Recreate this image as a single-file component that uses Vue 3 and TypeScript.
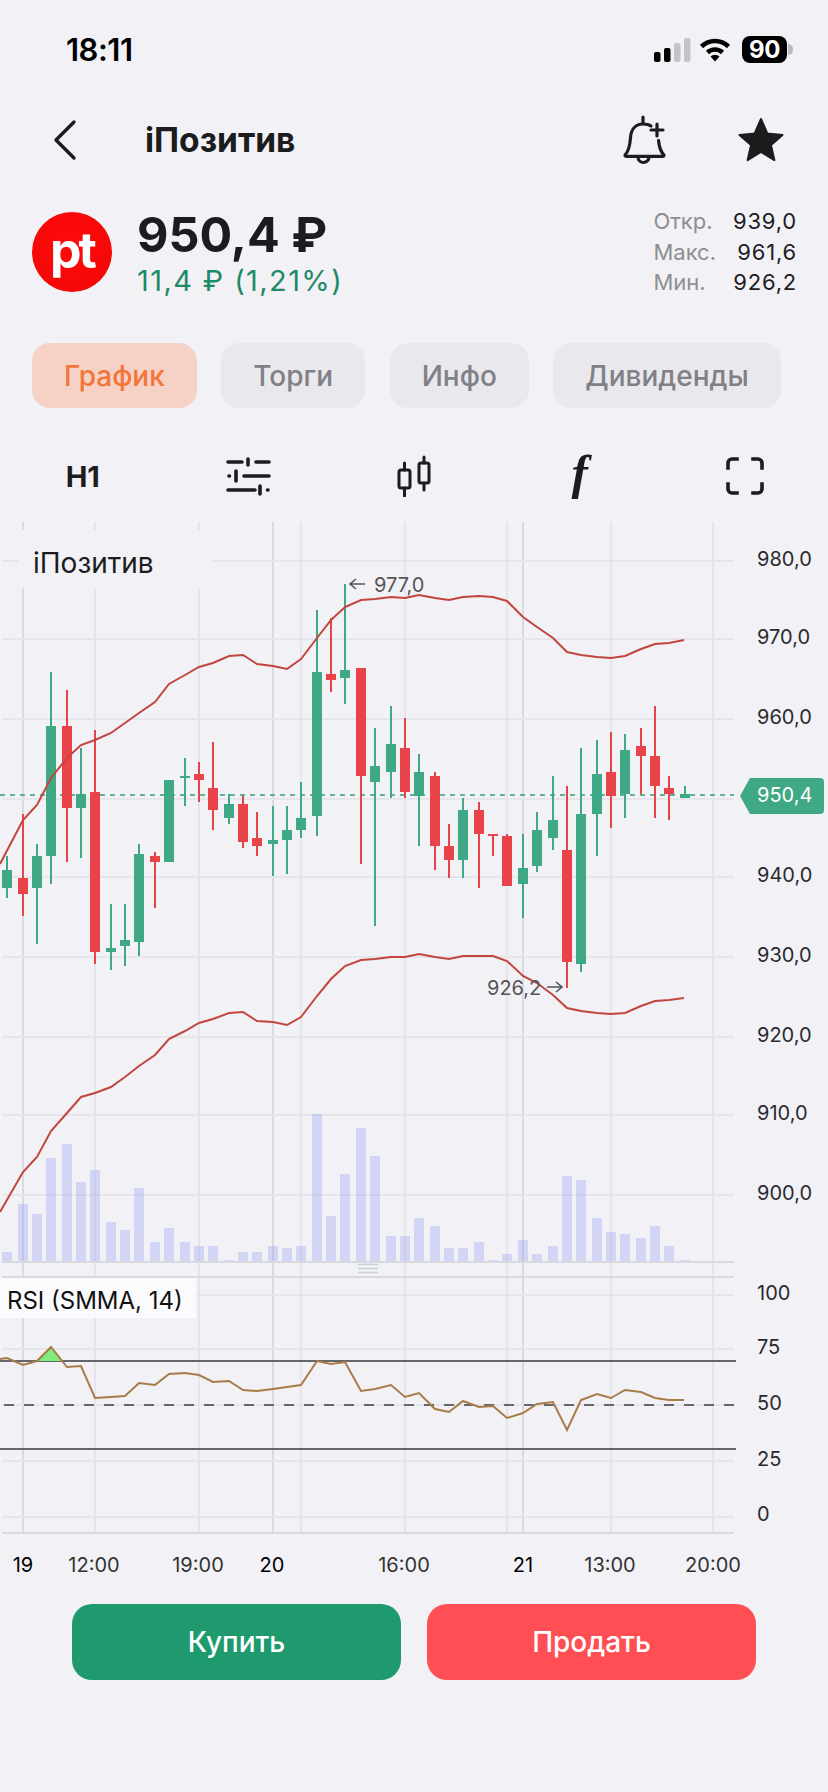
<template>
  <div class="screen">
    <div class="status-bar">
      <span class="time">18:11</span>
      <div class="status-icons">
        <svg class="signal" width="37" height="24" viewBox="0 0 37 24">
          <rect x="0" y="14" width="6.5" height="10" rx="2" fill="#000" />
          <rect x="10" y="10" width="6.5" height="14" rx="2" fill="#000" />
          <rect x="20" y="5" width="6.5" height="19" rx="2" fill="#c3c3c8" />
          <rect x="30" y="0" width="6.5" height="24" rx="2" fill="#c3c3c8" />
        </svg>
        <svg class="wifi" width="32" height="25" viewBox="0 0 32 25">
          <path d="M2.5 9.5a19.5 19.5 0 0 1 27 0" fill="none" stroke="#000" stroke-width="4.6" />
          <path d="M8.5 15.5a11 11 0 0 1 15 0" fill="none" stroke="#000" stroke-width="4.6" />
          <path d="M11.5 19.5a6.5 6.5 0 0 1 9 0L16 24.5z" fill="#000" />
        </svg>
        <div class="battery">
          <span class="battery-level">90</span>
          <i class="battery-nub"></i>
        </div>
      </div>
    </div>

    <div class="nav">
      <svg class="back" width="24" height="42" viewBox="0 0 24 42">
        <path d="M21 3 3 21l18 18" fill="none" stroke="#1c1c1e" stroke-width="3.4" stroke-linecap="round" stroke-linejoin="round" />
      </svg>
      <span class="nav-title">iПозитив</span>
      <svg class="bell" width="48" height="52" viewBox="0 0 48 52">
        <path d="M23 4v6" fill="none" stroke="#1c1c1e" stroke-width="3.2" stroke-linecap="round" />
        <path d="M31 13c-2-1.500-4.500-2-8-2-8.500 0-12 6.500-12.500 13.500-.5 8-1.500 13-5 17-1 1-.5 1.800.8 1.800h36.400c1.300 0 1.800-.8.800-1.800-2.800-3-4.300-7.500-5-14" fill="none" stroke="#1c1c1e" stroke-width="3.2" stroke-linecap="round" stroke-linejoin="round" />
        <path d="M18 44a5.500 5.500 0 0 0 11 0" fill="none" stroke="#1c1c1e" stroke-width="3.2" />
        <path d="M37 11v12M31 17h12" fill="none" stroke="#1c1c1e" stroke-width="3.2" stroke-linecap="round" />
      </svg>
      <svg class="star" width="48" height="46" viewBox="0 0 48 46">
        <path d="M24 3l6.300 14.500 15.200 1.400-11.500 10.200 3.400 15L24 36l-13.400 8.100 3.400-15L2.500 18.900l15.200-1.400z" fill="#1c1c1e" stroke="#1c1c1e" stroke-width="2" stroke-linejoin="round" />
      </svg>
    </div>

    <div class="quote">
      <div class="logo"><span>pt</span></div>
      <div class="quote-main">
        <div class="price">950,4 ₽</div>
        <div class="change">11,4 ₽ (1,21%)</div>
      </div>
      <div class="ohlc">
        <template v-for="row in ohlc" :key="row.label">
          <span class="ohlc-label">{{ row.label }}</span>
          <span class="ohlc-value">{{ row.value }}</span>
        </template>
      </div>
    </div>

    <div class="tabs">
      <button v-for="(tab, i) in tabs" :key="tab" :class="['tab', { active: i === 0 }]">{{ tab }}</button>
    </div>

    <div class="toolbar">
      <span class="tool h1">H1</span>
      <svg class="tool" width="46" height="40" viewBox="0 0 46 40" fill="none" stroke="#1c1c1e" stroke-width="3.6" stroke-linecap="round">
        <path d="M3 6h14M23 3v6M31 6h13" />
        <path d="M4 20h.5M11 15v10M19 20h25" />
        <path d="M3 34h27M35 30v8M42.500 34h.5" />
      </svg>
      <svg class="tool" width="36" height="42" viewBox="0 0 36 42" fill="none" stroke="#1c1c1e" stroke-width="3">
        <rect x="3" y="15" width="11" height="18" rx="2" />
        <path d="M8.500 8v7M8.500 33v8" stroke-linecap="round" />
        <rect x="23" y="8" width="10" height="20" rx="2" />
        <path d="M28 2v6M28 28v7" stroke-linecap="round" />
      </svg>
      <span class="tool fx">f</span>
      <svg class="tool" width="38" height="38" viewBox="0 0 38 38" fill="none" stroke="#1c1c1e" stroke-width="3.6" stroke-linecap="square">
        <path d="M2 11V6a4 4 0 0 1 4-4h5M27 2h5a4 4 0 0 1 4 4v5M36 27v5a4 4 0 0 1-4 4h-5M11 36H6a4 4 0 0 1-4-4v-5" />
      </svg>
    </div>

    <!-- viewBox keeps the chart in screen coordinates, y starts where the chart does -->
    <svg class="chart" width="828" height="1068" viewBox="0 522 828 1068">
      <line v-for="x in gridX" :key="'gx' + x" :x1="x" :x2="x" y1="522" y2="1533" class="grid" />
      <line v-for="x in dayX" :key="'dx' + x" :x1="x" :x2="x" y1="522" y2="1533" class="grid day" />
      <line v-for="y in gridY" :key="'gy' + y" x1="2" x2="734" :y1="y" :y2="y" class="grid" />

      <rect x="18" y="530" width="194" height="58" fill="#f1f1f6" />
      <text x="33" y="573" class="series-name">iПозитив</text>

      <rect v-for="v in volumes" :key="'v' + v.x" :x="v.x - 5" :y="v.top" width="10" :height="1262 - v.top" fill="#7d8cf0" opacity="0.27" />
      <line x1="2" x2="734" y1="1262" y2="1262" class="axis" />
      <line x1="2" x2="734" y1="1277" y2="1277" class="axis" />
      <path d="M358 1264.500h20M358 1268.500h20M358 1272.500h20" stroke="#c8d2d5" stroke-width="1.500" />

      <line x1="0" x2="734" y1="795" y2="795" stroke="#2f9c78" stroke-width="1.500" stroke-dasharray="5 5" />

      <g v-for="c in candles" :key="c.x" :fill="c.up ? green : red" :stroke="c.up ? green : red">
        <line :x1="c.x" :x2="c.x" :y1="c.high" :y2="c.low" stroke-width="2" />
        <rect :x="c.x - 5" :y="c.top" width="10" :height="c.bottom - c.top" stroke="none" />
      </g>

      <polyline :points="bandUpper" class="band" />
      <polyline :points="bandLower" class="band" />

      <path d="M365 584h-15m6-5-6 5 6 5" fill="none" stroke="#555" stroke-width="1.600" />
      <text x="374" y="592" class="mark">977,0</text>
      <text x="487" y="995" class="mark">926,2</text>
      <path d="M547 987h15m-6-5 6 5-6 5" fill="none" stroke="#555" stroke-width="1.600" />

      <text v-for="p in priceLabels" :key="p.text" x="757" :y="p.y + 7" class="axis-label">{{ p.text }}</text>
      <path d="M750 778h70a4 4 0 0 1 4 4v28a4 4 0 0 1-4 4h-70l-10-18z" fill="#3fa884" />
      <text x="757" y="802" class="axis-label current">950,4</text>

      <rect x="0" y="1278" width="196" height="40" fill="#fbfbfd" />
      <text x="7" y="1309" class="rsi-name">RSI (SMMA, 14)</text>
      <line x1="0" x2="736" y1="1361" y2="1361" class="level" />
      <line x1="0" x2="736" y1="1449" y2="1449" class="level" />
      <line x1="4" x2="734" y1="1405" y2="1405" class="level" stroke-dasharray="10 10" />
      <polygon points="37,1361 51,1347 62,1361" fill="#7fee7f" />
      <polyline :points="rsiLine" class="rsi" />
      <line x1="2" x2="734" y1="1533" y2="1533" class="axis" />

      <text v-for="t in timeLabels" :key="t.text" :x="t.x" y="1572" text-anchor="middle" :class="['time-label', { strong: t.day }]">{{ t.text }}</text>
    </svg>

    <div class="actions">
      <button class="action buy">Купить</button>
      <button class="action sell">Продать</button>
    </div>
  </div>
</template>

<script setup lang="ts">
const green = '#3fa884'
const red = '#e84348'

const ohlc = [
  { label: 'Откр.', value: '939,0' },
  { label: 'Макс.', value: '961,6' },
  { label: 'Мин.', value: '926,2' },
]
const tabs = ['График', 'Торги', 'Инфо', 'Дивиденды']

const gridX = [95, 199, 301, 405, 507, 611, 713]
const dayX = [23, 273, 523]
const gridY = [561, 639, 719, 799, 877, 957, 1037, 1115, 1195, 1295, 1349, 1405, 1461, 1517]

// x, high, low, body top, body bottom, up
const rawCandles: [number, number, number, number, number, boolean][] = [
  [7, 856, 898, 870, 888, true], [23, 814, 916, 878, 894, false], [37, 844, 944, 856, 888, true],
  [51, 672, 884, 726, 856, true], [67, 690, 862, 726, 808, false], [81, 748, 858, 794, 808, true],
  [95, 730, 964, 792, 952, false], [111, 904, 970, 948, 952, true], [125, 904, 966, 940, 946, true],
  [139, 844, 956, 854, 942, true], [155, 852, 908, 856, 862, false], [169, 780, 862, 780, 862, true],
  [185, 758, 806, 776, 778, true], [199, 762, 802, 774, 780, false], [213, 742, 830, 788, 810, false],
  [229, 794, 824, 804, 818, true], [243, 796, 848, 804, 842, false], [257, 812, 856, 838, 846, false],
  [273, 806, 876, 840, 844, true], [287, 806, 874, 830, 840, true], [301, 782, 838, 818, 830, true],
  [317, 610, 836, 672, 816, true], [331, 618, 692, 674, 680, false], [345, 584, 704, 670, 678, true],
  [361, 668, 864, 668, 776, false], [375, 728, 926, 766, 782, true], [391, 706, 798, 744, 772, true],
  [405, 718, 798, 748, 792, false], [419, 754, 846, 772, 796, true], [435, 772, 870, 776, 846, false],
  [449, 824, 878, 846, 860, false], [463, 798, 878, 810, 860, true], [479, 802, 888, 810, 834, false],
  [493, 834, 856, 834, 836, false], [507, 834, 886, 836, 886, false], [523, 834, 918, 868, 884, true],
  [537, 812, 872, 830, 866, true], [553, 776, 850, 820, 838, true], [567, 786, 988, 850, 962, false],
  [581, 748, 972, 814, 964, true], [597, 740, 856, 774, 814, true], [611, 732, 828, 772, 796, false],
  [625, 734, 818, 750, 794, true], [641, 728, 794, 746, 756, false], [655, 706, 818, 756, 786, false],
  [669, 776, 820, 788, 794, false], [685, 786, 798, 794, 798, true],
]
const candles = rawCandles.map(([x, high, low, top, bottom, up]) => ({ x, high, low, top, bottom, up }))

const volumeTops = [
  1252, 1204, 1214, 1158, 1144, 1182, 1170, 1222, 1230, 1188, 1242, 1228, 1242, 1246, 1246, 1260,
  1252, 1252, 1246, 1248, 1246, 1114, 1216, 1174, 1128, 1156, 1236, 1236, 1218, 1226, 1248, 1248,
  1242, 1260, 1254, 1240, 1254, 1246, 1176, 1180, 1218, 1232, 1234, 1238, 1226, 1246, 1260,
]
const volumes = volumeTops.map((top, i) => ({ x: candles[i].x, top }))

const bandUpper = '0,864 23,820 37,805 51,778 67,758 81,745 95,740 111,733 125,723 139,713 155,702 169,684 185,675 199,667 213,663 229,656 243,655 257,664 273,666 287,669 301,659 317,638 331,620 345,607 361,600 375,599 391,597 405,598 419,595 435,598 449,600 463,597 479,596 493,597 507,601 523,617 537,627 553,638 567,652 581,655 597,657 611,658 625,656 641,649 655,644 669,643 684,640'
const bandLower = '0,1212 23,1172 37,1157 51,1131 67,1113 81,1097 95,1093 111,1087 125,1077 139,1066 155,1055 169,1039 185,1031 199,1023 213,1019 229,1013 243,1012 257,1021 273,1022 287,1025 301,1017 317,996 331,979 345,966 361,960 375,959 391,957 405,957 419,954 435,957 449,959 463,956 479,956 493,956 507,961 523,976 537,983 553,995 567,1008 581,1011 597,1013 611,1014 625,1013 641,1006 655,1001 669,1000 684,998'
const rsiLine = '0,1359 7,1358 23,1365 37,1361 51,1347 67,1367 81,1366 95,1398 111,1397 125,1396 139,1383 155,1385 169,1374 185,1373 199,1375 213,1382 229,1381 243,1390 257,1391 273,1389 287,1387 301,1385 317,1361 331,1364 345,1362 361,1391 375,1389 391,1385 405,1397 419,1393 435,1409 449,1412 463,1401 479,1407 493,1406 507,1418 523,1413 537,1404 553,1402 567,1430 581,1400 597,1394 611,1398 625,1390 641,1392 655,1398 669,1400 684,1400'

const priceLabels = [
  { text: '980,0', y: 559 }, { text: '970,0', y: 637 }, { text: '960,0', y: 717 },
  { text: '940,0', y: 875 }, { text: '930,0', y: 955 }, { text: '920,0', y: 1035 },
  { text: '910,0', y: 1113 }, { text: '900,0', y: 1193 }, { text: '100', y: 1293 },
  { text: '75', y: 1347 }, { text: '50', y: 1403 }, { text: '25', y: 1459 }, { text: '0', y: 1514 },
]
const timeLabels = [
  { text: '19', x: 23, day: true }, { text: '12:00', x: 94, day: false }, { text: '19:00', x: 198, day: false },
  { text: '20', x: 272, day: true }, { text: '16:00', x: 404, day: false }, { text: '21', x: 523, day: true },
  { text: '13:00', x: 610, day: false }, { text: '20:00', x: 713, day: false },
]
</script>

<style>
body {
  background: #f1f1f6;
}
</style>

<style scoped>
.screen {
  width: 828px;
  height: 1792px;
  overflow: hidden;
  background: #f1f1f6;
  color: #1c1c1e;
  font-family: Inter, "Liberation Sans", sans-serif;
}

.status-bar {
  height: 100px;
  display: flex;
  align-items: flex-start;
  justify-content: space-between;
  padding: 36px 41px 0 66px;
  box-sizing: border-box;
}

.time {
  font-size: 31px;
  font-weight: 600;
  line-height: 28px;
  color: #000;
  letter-spacing: -0.5px;
}

.status-icons {
  display: flex;
  align-items: flex-start;
  gap: 10px;
}

.signal {
  margin-top: 2px;
  margin-right: -2px;
}

.wifi {
  margin-top: 1px;
}

.battery {
  position: relative;
  width: 45px;
  height: 27px;
  margin-left: 1px;
  border-radius: 8px;
  background: #000;
  color: #fff;
  font-size: 24px;
  font-weight: 700;
  line-height: 27px;
  text-align: center;
  letter-spacing: -0.5px;
}

.battery-nub {
  position: absolute;
  left: 46px;
  top: 8px;
  width: 5px;
  height: 11px;
  border-radius: 0 5px 5px 0;
  background: #b9b9be;
}

.nav {
  height: 80px;
  display: flex;
  align-items: center;
  padding-left: 53px;
}

.nav-title {
  margin-left: 68px;
  font-size: 33.500px;
  font-weight: 700;
}

.bell {
  margin-left: auto;
  margin-top: -2px;
}

.star {
  margin: -2px 43px 0 69px;
}

.quote {
  display: flex;
  align-items: center;
  height: 80px;
  margin-top: 32px;
  padding: 0 31px 0 32px;
}

.logo {
  width: 80px;
  height: 80px;
  border-radius: 50%;
  background: radial-gradient(circle at 45% 40%, #ff0a0a 0%, #f50808 70%, #d90a0a 100%);
  display: flex;
  align-items: center;
  justify-content: center;
  color: #fff;
  font-size: 50px;
  font-weight: 700;
  letter-spacing: -3px;
}

.logo span {
  margin-top: -4px;
}

.quote-main {
  margin-left: 25px;
}

.price {
  font-size: 48.500px;
  font-weight: 700;
  line-height: 56px;
  margin-top: 2px;
}

.change {
  font-size: 29px;
  line-height: 36px;
  color: #1e8a66;
  letter-spacing: 1.400px;
}

.ohlc {
  margin-left: auto;
  display: grid;
  grid-template-columns: auto auto;
  column-gap: 17px;
  row-gap: 0;
  font-size: 22px;
  line-height: 30.500px;
}

.ohlc-label {
  color: #8e8e93;
}

.ohlc-value {
  color: #1c1c1e;
  text-align: right;
  letter-spacing: 0.8px;
}

.tabs {
  display: flex;
  gap: 24.500px;
  margin-top: 51px;
  padding-left: 32px;
}

.tab {
  height: 65px;
  padding: 0 32px;
  border: none;
  border-radius: 18px;
  background: #e8e8ed;
  color: #808086;
  font-family: inherit;
  font-size: 28px;
  font-weight: 500;
}

.tab.active {
  background: #f5d2c5;
  color: #f4743a;
}

.toolbar {
  height: 114px;
  display: grid;
  grid-template-columns: repeat(5, 1fr);
  justify-items: center;
  align-items: center;
  padding-top: 22px;
  box-sizing: border-box;
}

.h1 {
  font-size: 29px;
  font-weight: 700;
}

.fx {
  font-family: "Liberation Serif", serif;
  font-style: italic;
  font-weight: 700;
  font-size: 49px;
  line-height: 44px;
  margin-top: -6px;
}

.chart {
  display: block;
}

.grid {
  stroke: #e5e5eb;
  stroke-width: 2;
}

.grid.day {
  stroke: #dadae1;
}

.axis {
  stroke: #d9d9df;
  stroke-width: 2;
}

.band {
  fill: none;
  stroke: #c2463e;
  stroke-width: 2;
}

.level {
  stroke: #66666c;
  stroke-width: 2;
}

.rsi {
  fill: none;
  stroke: #a87c48;
  stroke-width: 2;
}

.series-name {
  font-size: 28px;
  fill: #1c1c1e;
}

.mark {
  font-size: 20px;
  fill: #555;
}

.axis-label {
  font-size: 20px;
  fill: #2a2a2e;
}

.axis-label.current {
  fill: #fff;
}

.rsi-name {
  font-size: 24px;
  fill: #111;
}

.time-label {
  font-size: 20px;
  fill: #333;
}

.time-label.strong {
  fill: #000;
}

.actions {
  display: flex;
  gap: 26px;
  margin-top: 14px;
  padding-left: 72px;
}

.action {
  width: 329px;
  height: 76px;
  border: none;
  border-radius: 20px;
  color: #fff;
  font-family: inherit;
  font-size: 28px;
  font-weight: 500;
}

.buy {
  background: #1e9a6e;
}

.sell {
  background: #ff4f55;
}
</style>
